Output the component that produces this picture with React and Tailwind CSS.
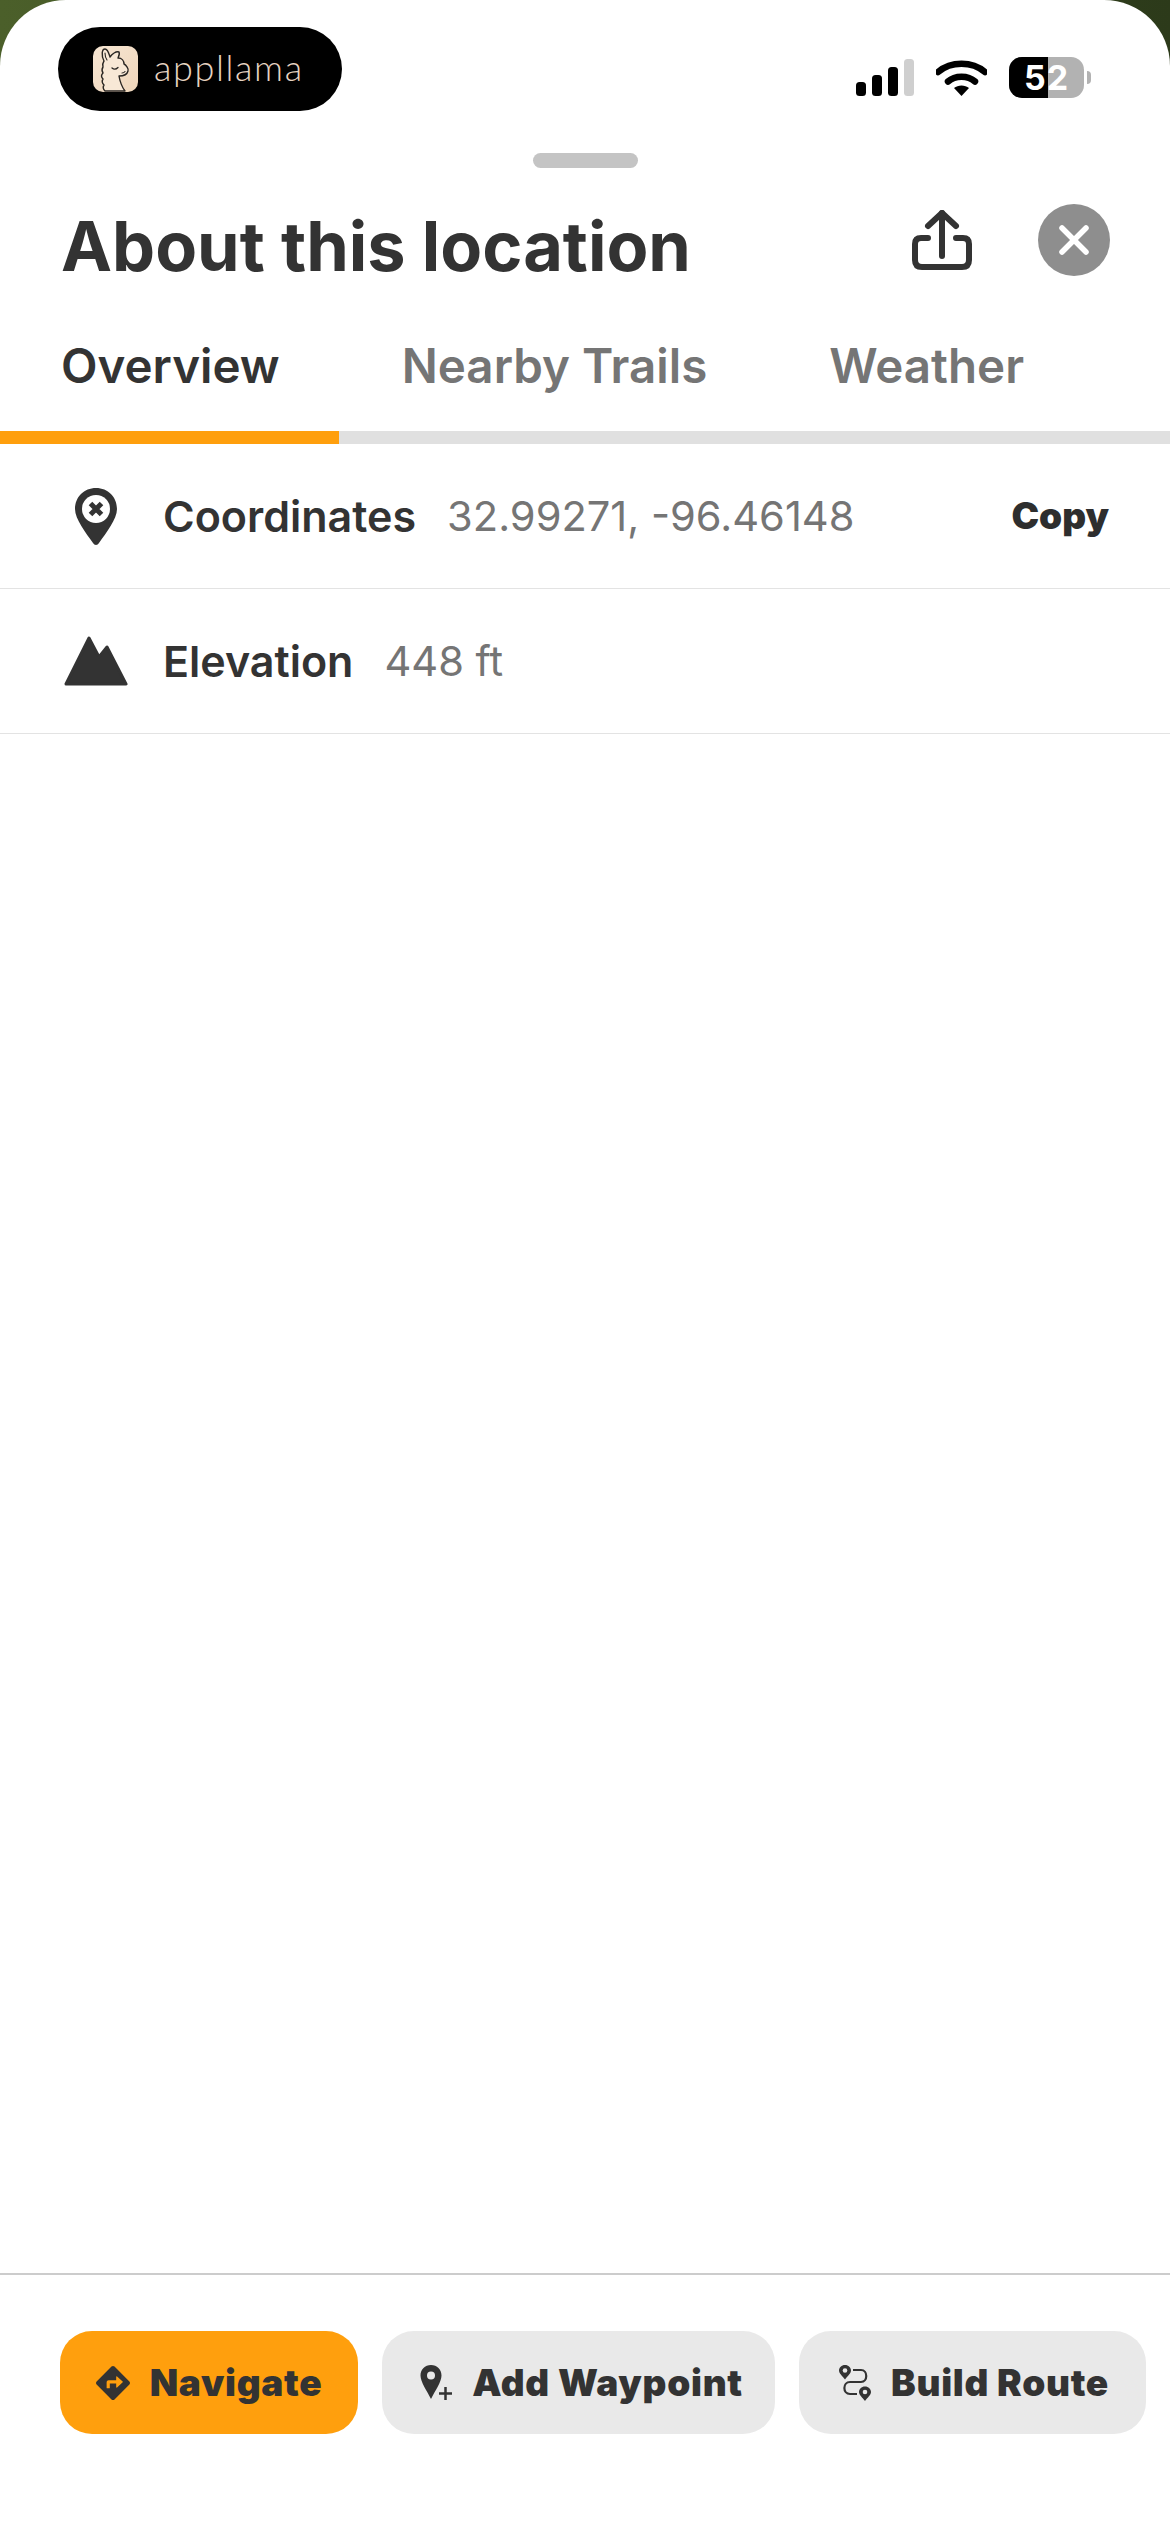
import { FaDirections } from 'react-icons/fa'

const StatusIcons = () => (
  <div className="flex items-center gap-[22px] mt-[30px] mr-[79px]">
    <svg width="58" height="37" viewBox="0 0 58 37">
      <rect x="0" y="23" width="10" height="14" rx="3.5" fill="#000" />
      <rect x="16" y="16" width="10" height="21" rx="3.5" fill="#000" />
      <rect x="32" y="8" width="10" height="29" rx="3.5" fill="#000" />
      <rect x="48" y="0" width="10" height="37" rx="3.5" fill="#cfcfcf" />
    </svg>
    <svg width="51" height="37" viewBox="0 0 51 37">
      <path d="M2 13 C15 2 36 2 49 13" fill="none" stroke="#000" strokeWidth="6.5" strokeLinecap="round" />
      <path d="M12 22.5 C19 16 32 16 39 22.5" fill="none" stroke="#000" strokeWidth="6.5" strokeLinecap="round" />
      <path d="M18 29 C22 25.5 29 25.5 33 29 L25.5 37 Z" fill="#000" />
    </svg>
    <div className="flex items-center">
      <div className="relative w-[75px] h-[41px] rounded-[13px] overflow-hidden flex bg-[#b2b2b2]">
        <div className="w-[39px] h-full bg-black" />
        <span className="absolute inset-0 flex items-center justify-center font-['Inter',sans-serif] font-bold text-[34px] leading-none tracking-[1px] text-white">52</span>
      </div>
      <div className="w-[4px] h-[13px] ml-[3px] rounded-r-full bg-[#b2b2b2]" />
    </div>
  </div>
)

const Llama = () => (
  <svg width="45" height="46" viewBox="0 0 45 46">
    <defs>
      <linearGradient id="llamaBg" x1="0" y1="0" x2="1" y2="1">
        <stop offset="0" stopColor="#f7e6d3" />
        <stop offset="1" stopColor="#efd6bb" />
      </linearGradient>
    </defs>
    <rect width="45" height="46" rx="10" fill="url(#llamaBg)" />
    <path d="M12 45 Q9 42 11 39 Q8 36 10 33 Q7 30 10 27 Q8 24 10 21 Q9 18 11 15 C8 9 9 3 12 3 C15 3 16 8 17 11 C19 8 23 5 26 6 C27 8 26 10 25 12 C29 12 31 15 31 18 C33 19 36 23 35 25 C34 29 29 30 26 30 C27 36 29 41 32 45 Z" fill="#f8e8d6" stroke="#2a2623" strokeWidth="1.4" strokeLinejoin="round" />
    <path d="M12 7 Q12 11 14 14" fill="none" stroke="#2a2623" strokeWidth="1.100" strokeLinecap="round" />
    <path d="M19 22 q3 2.500 6 -0.500" fill="none" stroke="#2a2623" strokeWidth="1.300" strokeLinecap="round" />
    <path d="M29 27 q2 0 3 -1.500" fill="none" stroke="#2a2623" strokeWidth="1.100" strokeLinecap="round" />
  </svg>
)

const ShareIcon = () => (
  <svg width="60" height="60" viewBox="0 0 60 60" fill="none" stroke="#333" strokeWidth="6" strokeLinecap="round" strokeLinejoin="round">
    <path d="M30 46 V3" />
    <path d="M16 16 L30 3 L44 16" />
    <path d="M16 28 H9 Q3 28 3 34 V50 Q3 57 10 57 H50 Q57 57 57 50 V34 Q57 28 51 28 H44" />
  </svg>
)

const CloseButton = () => (
  <div className="w-[72px] h-[72px] rounded-full bg-[#8e8e8e] flex items-center justify-center">
    <svg width="30" height="30" viewBox="0 0 30 30" stroke="#fff" strokeWidth="5.500" strokeLinecap="round">
      <path d="M3 3 L27 27" />
      <path d="M27 3 L3 27" />
    </svg>
  </div>
)

const PinIcon = () => (
  <svg width="42" height="57" viewBox="0 0 42 57">
    <path d="M21 0 C33 0 42 9 42 21 C42 31 31 45 24 55 C22.500 57.500 19.500 57.500 18 55 C11 45 0 31 0 21 C0 9 9 0 21 0 Z" fill="#333" />
    <circle cx="21" cy="21" r="14" fill="#fff" />
    <path d="M15.500 15.500 L26.500 26.500 M26.500 15.500 L15.500 26.500" stroke="#333" strokeWidth="5" strokeLinecap="butt" />
  </svg>
)

const MountainIcon = () => (
  <svg width="64" height="50" viewBox="0 0 64 50">
    <path d="M2 48 L25 2 L35 21 L43 11 L62 48 Z" fill="#333" stroke="#333" strokeWidth="3" strokeLinejoin="round" />
  </svg>
)

const WaypointIcon = () => (
  <svg width="32" height="36" viewBox="0 0 32 36" fill="#333">
    <path d="M11 0 C17 0 21.500 4.500 21.500 10.500 C21.500 17 15 26 11 34 C7 26 0.500 17 0.500 10.500 C0.500 4.500 5 0 11 0 Z" />
    <circle cx="11" cy="10.500" r="4" fill="#e9e9e9" />
    <path d="M19 28.500 H32 M25.500 22 V35" stroke="#333" strokeWidth="2.500" fill="none" />
  </svg>
)

const RouteIcon = () => (
  <svg width="32" height="36" viewBox="0 0 32 36" fill="none">
    <path d="M6 0 C9.500 0 12 2.500 12 5.500 C12 8.500 8.500 11 6 14.500 C3.500 11 0 8.500 0 5.500 C0 2.500 2.500 0 6 0 Z" fill="#333" />
    <circle cx="6" cy="5.500" r="2.300" fill="#e9e9e9" />
    <path d="M26 21.500 C29.500 21.500 32 24 32 27 C32 30 28.500 32.500 26 36 C23.500 32.500 20 30 20 27 C20 24 22.500 21.500 26 21.500 Z" fill="#333" />
    <circle cx="26" cy="27" r="2.300" fill="#e9e9e9" />
    <path d="M14 5 H22 C29 5 29 17 22 17 H11 C3.500 17 3.500 29 11 29 H18" stroke="#333" strokeWidth="2.200" />
  </svg>
)

const tabs = [
  { label: 'Overview', active: true },
  { label: 'Nearby Trails' },
  { label: 'Weather' },
]

const InfoRow = ({ icon, label, value, action }) => (
  <div className="flex items-center h-[145px] border-b border-[#e3e3e3] pr-[61px]">
    <div className="w-[163px] flex justify-center pl-[64px] pr-[35px] shrink-0">{icon}</div>
    <span className="text-[43px] font-semibold text-[#333]">{label}</span>
    <span className="ml-[31px] text-[41.600px] text-[#757575]">{value}</span>
    {action && <span className="ml-auto text-[37px] font-black text-[#2e2e2e]">{action}</span>}
  </div>
)

const ActionButton = ({ icon, label, className }) => (
  <div className={`flex items-center justify-center h-[103px] rounded-[32px] gap-[20px] shrink-0 ${className}`}>
    {icon}
    <span className="text-[37px] font-black text-[#333] tracking-[0.7px]">{label}</span>
  </div>
)

export default function App() {
  return (
    <div className="w-[1170px] h-[2532px] bg-[linear-gradient(90deg,#4b5f2a,#2c3a1a)] font-['Inter',sans-serif] overflow-hidden">
      <div className="h-full bg-white rounded-t-[66px] flex flex-col">
        <div className="flex items-start justify-between pt-[27px]">
          <div className="ml-[58px] w-[284px] h-[84px] rounded-full bg-black flex items-center pl-[35px]">
            <Llama />
            <span className="ml-[16px] font-['Lato',sans-serif] font-light text-[36px] leading-none tracking-[1.600px] text-[#e6d3c0] -mt-[4px]">appllama</span>
          </div>
          <StatusIcons />
        </div>

        <div className="w-[105px] h-[15px] rounded-full bg-[#c4c4c4] mx-auto mt-[42px]" />

        <div className="flex items-center h-[72px] mt-[36px] pl-[61px] pr-[60px]">
          <h1 className="text-[68.400px] mt-[12px] font-bold text-[#333] leading-none">About this location</h1>
          <div className="ml-auto mr-[66px]"><ShareIcon /></div>
          <CloseButton />
        </div>

        <div className="flex h-[155px] overflow-hidden shrink-0">
          {tabs.map((tab) => (
            <div key={tab.label} className={`px-[61px] pt-[25px] flex items-center text-[47.500px] font-semibold whitespace-nowrap shrink-0 ${tab.active ? 'text-[#333]' : 'text-[#757575]'}`}>
              {tab.label}
            </div>
          ))}
        </div>
        <div className="h-[13px] bg-[#e0e0e0] shrink-0">
          <div className="w-[339px] h-full bg-[#ff9f0d]" />
        </div>

        <InfoRow icon={<PinIcon />} label="Coordinates" value="32.99271, -96.46148" action="Copy" />
        <InfoRow icon={<MountainIcon />} label="Elevation" value="448 ft" />

        <div className="mt-auto border-t-2 border-[#cccccc] h-[259px] pt-[56px] pl-[60px] flex gap-[24px]">
          <ActionButton icon={<FaDirections size={34} color="#333" />} label="Navigate" className="w-[298px] bg-[#ff9f0d]" />
          <ActionButton icon={<WaypointIcon />} label="Add Waypoint" className="w-[393px] pl-[6px] bg-[#e9e9e9]" />
          <ActionButton icon={<RouteIcon />} label="Build Route" className="w-[347px] pl-[3px] bg-[#e9e9e9]" />
        </div>
      </div>
    </div>
  )
}
